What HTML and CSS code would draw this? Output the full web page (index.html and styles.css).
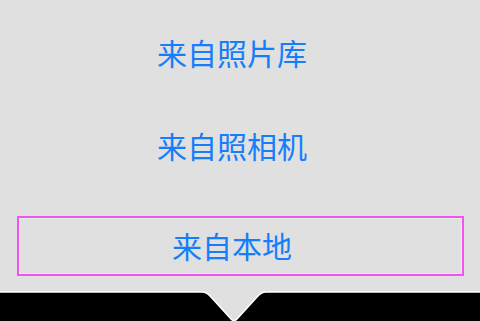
FILE: index.html
```html
<!DOCTYPE html>
<html lang="zh-CN">
<head>
    <meta charset="UTF-8">
    <meta name="viewport" content="width=device-width, initial-scale=1.0">
    <title>选择图片</title>
    <link rel="stylesheet" href="styles.css">
</head>
<body>
    <div class="popover">
        <ul class="menu">
            <li class="menu-item">来自照片库</li>
            <li class="menu-item">来自照相机</li>
            <li class="menu-item selected">来自本地</li>
        </ul>
    </div>

    <div class="bottom-bar">
        <svg width="480" height="31" viewBox="0 0 480 31">
            <rect x="0" y="0" width="480" height="31" fill="#000"/>
            <path d="M-2 -2 H482 V2 H266 Q261 2 257 7 L237 29 Q234 32 231 29 L211 7 Q207 2 202 2 H-2 Z"
                  fill="#e0e0e0" stroke="#fff" stroke-width="1.5"/>
        </svg>
    </div>
</body>
</html>
```

FILE: styles.css
```css
* {
    margin: 0;
    padding: 0;
    box-sizing: border-box;
}
body {
    width: 480px;
    height: 321px;
    overflow: hidden;
    background: #e0e0e0;
    font-family: "Noto Sans CJK SC", "Noto Sans", sans-serif;
    display: flex;
    flex-direction: column;
}
.popover {
    height: 290px;
    padding-top: 23px;
}
.menu {
    list-style: none;
    display: flex;
    flex-direction: column;
}
.menu-item {
    height: 60px;
    margin: 0 16px 33px 17px;
    padding: 0 17px 3px 0;
    display: flex;
    align-items: center;
    justify-content: center;
    color: #167efb;
    font-size: 30px;
}
.menu-item + .menu-item + .menu-item {
    margin-top: 7px;
}
.menu-item.selected {
    border: 2px solid #f452f4;
    box-shadow: inset 0 0 0 1px #dcf2dc;
}
.bottom-bar {
    height: 31px;
    display: block;
}
.bottom-bar svg {
    display: block;
}
```
